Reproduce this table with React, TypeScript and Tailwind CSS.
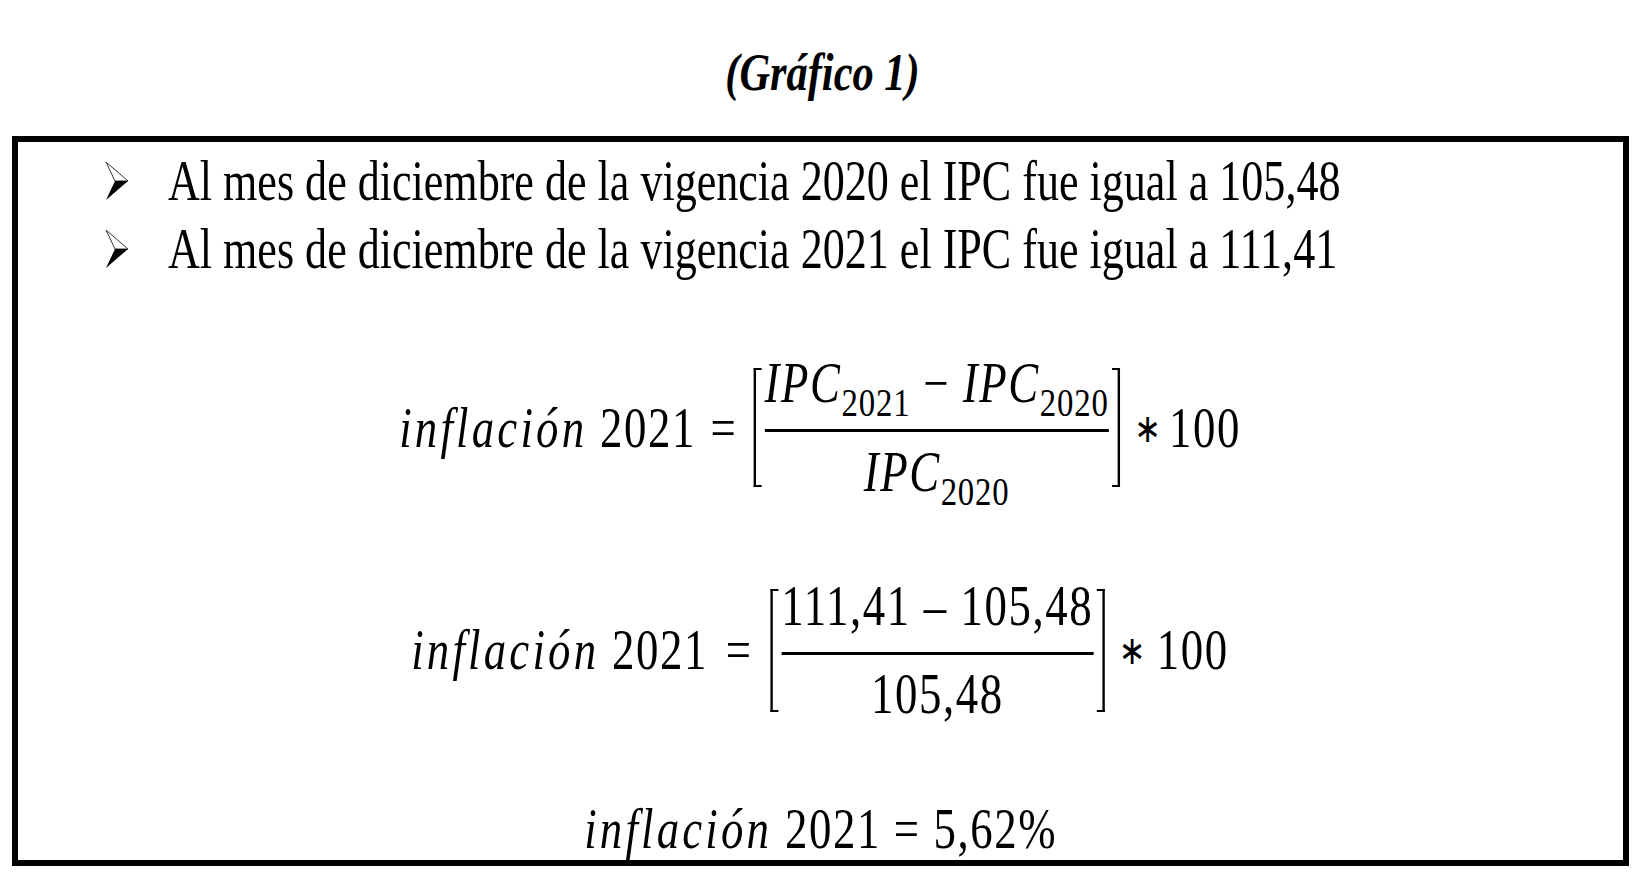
import React from "react";

const Arrow = () => (
  <svg width="24" height="40" viewBox="0 0 24 40" className="shrink-0">
    <polygon points="1,1 23,20 10,20" fill="white" stroke="#333" strokeWidth="1" />
    <polygon points="10,20 23,20 1,39" fill="black" />
  </svg>
);

const LBracket = ({ h }: { h: string }) => (
  <div className={`${h} w-[10px] shrink-0 border-l-[3px] border-y-[2px] border-r-0 border-black`} />
);

const RBracket = ({ h }: { h: string }) => (
  <div className={`${h} w-[10px] shrink-0 border-r-[3px] border-y-[2px] border-l-0 border-black`} />
);

const Sub = ({ children }: { children: React.ReactNode }) => (
  <span className="not-italic text-[41px] tracking-[1px] align-[-0.34em]">{children}</span>
);

const Infl = () => <span className="italic tracking-[4px]">inflación</span>;

const Bullet = ({ text }: { text: string }) => (
  <div className="flex items-center h-[68px]">
    <div className="w-[87px] shrink-0" />
    <Arrow />
    <div className="w-[39px] shrink-0" />
    <span className="inline-block shrink-0 whitespace-nowrap origin-left scale-x-[0.787] text-[56px] leading-none">
      {text}
    </span>
  </div>
);

export default function App() {
  return (
    <div className="w-[1645px] h-[888px] bg-white text-black font-['Liberation_Serif','Times_New_Roman',serif] overflow-hidden">
      <div className="pt-[46px] h-[136px] flex justify-center">
        <span className="inline-block scale-x-[0.8] text-[53px] leading-none font-bold italic">
          (Gráfico 1)
        </span>
      </div>

      <div className="ml-[12px] w-[1617px] h-[730px] border-[6px] border-black flex flex-col">
        <div className="pt-[5px]">
          <Bullet text="Al mes de diciembre de la vigencia 2020 el IPC fue igual a 105,48" />
          <Bullet text="Al mes de diciembre de la vigencia 2021 el IPC fue igual a 111,41" />
        </div>

        {/* fórmula 1 */}
        <div className="mt-[72px] flex justify-center">
          <div className="flex items-center scale-x-[0.8] text-[56px] leading-none tracking-[2px]">
            <span className="whitespace-nowrap">
              <Infl /> 2021
            </span>
            <span className="ml-[18px] mr-[20px]">=</span>
            <LBracket h="h-[119px]" />
            <div className="flex flex-col items-center px-[4px]">
              <div className="h-[56px] whitespace-nowrap italic">
                IPC<Sub>2021</Sub> <span className="not-italic">−</span> IPC<Sub>2020</Sub>
              </div>
              <div className="mt-[18px] h-[3px] w-full bg-black" />
              <div className="mt-[12px] h-[56px] whitespace-nowrap italic">
                IPC<Sub>2020</Sub>
              </div>
            </div>
            <RBracket h="h-[119px]" />
            <span className="ml-[18px] font-['DejaVu_Sans',sans-serif] text-[40px]">∗</span>
            <span className="ml-[8px]">100</span>
          </div>
        </div>

        {/* fórmula 2 */}
        <div className="mt-[78px] flex justify-center">
          <div className="flex items-center scale-x-[0.8] text-[56px] leading-none tracking-[2px]">
            <span className="whitespace-nowrap">
              <Infl /> 2021
            </span>
            <span className="ml-[22px] mr-[22px]">=</span>
            <LBracket h="h-[123px]" />
            <div className="flex flex-col items-center px-[4px]">
              <div className="h-[56px] whitespace-nowrap">111,41 – 105,48</div>
              <div className="mt-[18px] h-[3px] w-full bg-black" />
              <div className="mt-[11px] h-[56px] whitespace-nowrap">105,48</div>
            </div>
            <RBracket h="h-[123px]" />
            <span className="ml-[18px] font-['DejaVu_Sans',sans-serif] text-[40px]">∗</span>
            <span className="ml-[12px]">100</span>
          </div>
        </div>

        {/* resultado */}
        <div className="mt-[79px] flex justify-center">
          <div className="scale-x-[0.8] text-[56px] leading-none whitespace-nowrap tracking-[2px]">
            <Infl /> 2021 = 5,62%
          </div>
        </div>
      </div>
    </div>
  );
}
